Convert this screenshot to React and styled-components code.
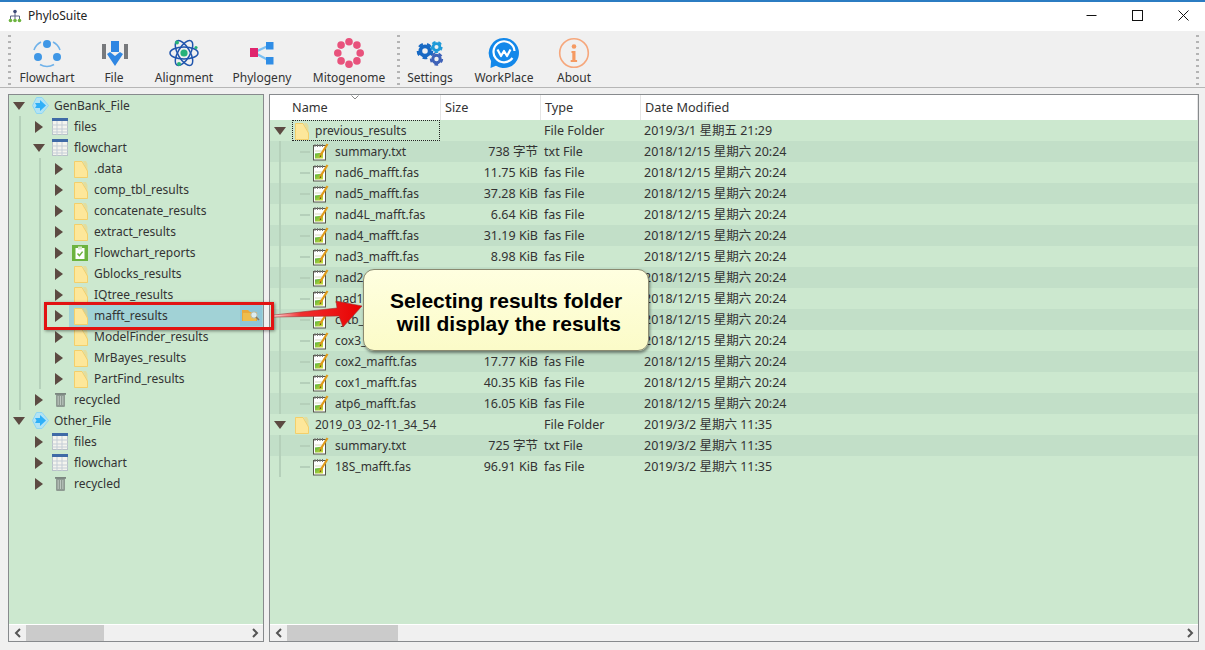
import React from "react";
import styled, { createGlobalStyle } from "styled-components";

const Global = createGlobalStyle`
  html, body { margin: 0; padding: 0; background: #f0f0f0; }
  body { font-family: "Noto Sans", "Noto Sans CJK SC", sans-serif; font-size: 12.5px; color: #333; overflow: hidden; }
`;

const Window = styled.div`
  position: relative;
  width: 1205px;
  height: 650px;
  display: flex;
  flex-direction: column;
  background: #f0f0f0;
  overflow: hidden;
`;

const TitleBar = styled.header`
  height: 27px;
  flex: none;
  display: flex;
  align-items: center;
  background: #fff;
  border-top: 2px solid #2b7cc2;
  padding: 0 0 2px 8px;
  gap: 6px;
  font-size: 12px;
  color: #222;
`;
const WinControls = styled.div`
  margin-left: auto;
  display: flex;
  padding-right: 16px;
  gap: 35px;
  color: #111;
`;
const Toolbar = styled.nav`
  height: 56px;
  flex: none;
  display: flex;
  align-items: stretch;
  border-bottom: 1px solid #b6b6b6;
  padding-left: 8px;
`;
const Grip = styled.div`
  width: 3px;
  margin: 2px ${(p) => p.$right}px 2px ${(p) => p.$left}px;
  background-image: radial-gradient(circle, #b4b4b4 1.4px, transparent 1.5px);
  background-size: 3px 6px;
`;
const Tool = styled.button`
  width: ${(p) => p.$w}px;
  flex: none;
  border: 0;
  background: transparent;
  padding: 5px 0 0;
  display: flex;
  flex-direction: column;
  align-items: center;
  font: inherit;
  font-size: 12px;
  color: #333;
  line-height: 14px;
`;
const ToolIcon = styled.span`
  width: 36px;
  height: 35px;
  display: block;
`;
const Spacer = styled.div`
  flex: 1;
`;
const Content = styled.main`
  flex: 1;
  display: flex;
  gap: 5px;
  padding: 6px 6px 8px 8px;
  min-height: 0;
`;
const Panel = styled.section`
  width: ${(p) => (p.$w ? p.$w + "px" : "auto")};
  flex: ${(p) => (p.$w ? "none" : "1")};
  box-sizing: border-box;
  border: 1px solid #878a8d;
  display: flex;
  flex-direction: column;
  background: #cce8cf;
  min-width: 0;
`;
const TreeArea = styled.div`
  flex: 1;
  min-height: 0;
`;
const guideBg = (g = []) => g.map(() => "linear-gradient(#b5d0ba,#b5d0ba)").join(",") || "none";
const guidePos = (g = []) => g.map((x) => `${x}px 0`).join(",") || "0 0";

const TreeRow = styled.div`
  height: 21px;
  display: flex;
  align-items: center;
  padding-left: ${(p) => p.$depth * 20}px;
  background-image: ${(p) => guideBg(p.$guides)};
  background-position: ${(p) => guidePos(p.$guides)};
  background-size: 2px 100%;
  background-repeat: no-repeat;
`;
const Expander = styled.span`
  width: 20px;
  height: 21px;
  flex: none;
  display: flex;
  align-items: center;
  justify-content: center;
`;
const ArrowRight = styled.i`
  display: block;
  border-left: 8px solid #5c4a42;
  border-top: 6px solid transparent;
  border-bottom: 6px solid transparent;
`;
const ArrowDown = styled.i`
  display: block;
  border-top: 8px solid #5c4a42;
  border-left: 6px solid transparent;
  border-right: 6px solid transparent;
`;
const Connector = styled.span`
  display: block;
  width: 10px;
  height: 2px;
  background: #b5d0ba;
  margin-left: 10px;
`;
const Node = styled.div`
  flex: 1;
  min-width: 0;
  height: ${(p) => (p.$selected ? "24px" : "21px")};
  display: flex;
  align-items: center;
  background: ${(p) => (p.$selected ? "#a1d2d6" : "transparent")};
  border: ${(p) => (p.$focus ? "1px dotted #222" : "0")};
  margin: ${(p) => (p.$focus ? "0 1px 0 2px" : "0")};
  box-sizing: border-box;
`;
const IconBox = styled.span`
  width: ${(p) => p.$w || 25}px;
  flex: none;
  display: flex;
  padding-left: ${(p) => p.$pad}px;
  box-sizing: border-box;
`;
const Label = styled.span`
  white-space: nowrap;
  font-size: 12px;
`;
const RowAction = styled.span`
  margin-left: auto;
  margin-right: 1px;
  width: 22px;
  height: 21px;
  background: #8fc6d8;
  display: flex;
  align-items: center;
  justify-content: center;
`;
const Scrollbar = styled.div`
  height: 16px;
  flex: none;
  display: flex;
  align-items: center;
  background: #f0f0f0;
  border-top: 1px solid #fff;
  color: #555;
`;
const ScrollBtn = styled.span`
  width: 17px;
  flex: none;
  display: flex;
  justify-content: center;
`;
const Thumb = styled.div`
  width: ${(p) => p.$w}px;
  height: 16px;
  background: #cbcbcb;
  margin-right: auto;
`;
const HeaderRow = styled.div`
  height: 25px;
  flex: none;
  background: #fff;
  display: grid;
  grid-template-columns: 171px 100px 100px 1fr;
  position: relative;
  font-size: 12.7px;
`;
const HeaderCell = styled.div`
  display: flex;
  align-items: center;
  padding: 0 0 2px ${(p) => p.$pad}px;
  border-right: 1px solid #e5e5e5;
`;
const SortMark = styled.svg`
  position: absolute;
  left: 81px;
  top: 0;
`;
const FileRow = styled.div`
  height: 21px;
  display: grid;
  grid-template-columns: 171px 100px 100px 1fr;
  background: ${(p) => (p.$alt ? "#c2dfc8" : "transparent")};
`;
const NameCell = styled.div`
  min-width: 0;
`;
const SizeCell = styled.div`
  text-align: right;
  padding-right: 3px;
  line-height: 21px;
`;
const TextCell = styled.div`
  padding-left: 3px;
  line-height: 21px;
  white-space: nowrap;
`;
const RedBox = styled.div`
  position: absolute;
  left: 44px;
  top: 302px;
  width: 230px;
  height: 28px;
  border: 3px solid #e21212;
  box-sizing: border-box;
  box-shadow: 1px 1px 3px rgba(0, 0, 0, 0.45);
`;
const Pointer = styled.svg`
  position: absolute;
  left: 270px;
  top: 285px;
`;
const Callout = styled.div`
  position: absolute;
  left: 363px;
  top: 269px;
  width: 286px;
  height: 82px;
  box-sizing: border-box;
  padding-top: 4px;
  border-radius: 11px;
  background: linear-gradient(#ffffe0, #fbfbc8);
  border: 1px solid #8a8a70;
  box-shadow: 1px 2px 3px rgba(0, 0, 0, 0.45);
  display: flex;
  align-items: center;
  justify-content: center;
  text-align: center;
  font-family: "Liberation Sans", Arial, sans-serif;
  font-weight: 700;
  font-size: 21px;
  line-height: 23px;
  color: #000;
  white-space: pre;
`;

const Folder = () => (
  <svg width="14" height="18" viewBox="0 0 14 18">
    <path d="M0.5 1.5 H8 L13.5 11 V17.5 H0.5 Z" fill="#fde79a" stroke="#f3cf6b" />
    <path d="M9 1 H12 L13.5 4 V12 Z" fill="#f7d36f" opacity=".5" />
  </svg>
);
const TableIcon = () => (
  <svg width="16" height="17" viewBox="0 0 16 17">
    <rect x="0.5" y="0.5" width="15" height="16" fill="#f4f4ee" stroke="#b8c2c8" />
    <rect x="0" y="0" width="16" height="3" fill="#3f6aa6" />
    <path d="M0 7h16M0 11h16M0 14h16M5 3v14M10 3v14" stroke="#c4cdd6" strokeWidth="1" />
  </svg>
);
const Trash = () => (
  <svg width="16" height="15" viewBox="0 0 16 15">
    <rect x="4" y="2" width="9" height="13" rx="1.2" fill="#8e9a92" />
    <rect x="3" y="1" width="11" height="1.8" fill="#7b867f" />
    <path d="M6.2 4v9M8.5 4v9M10.8 4v9" stroke="#c4cdc6" strokeWidth=".9" />
  </svg>
);
const Root = () => (
  <svg width="17" height="17" viewBox="0 0 17 17">
    <path d="M4.5 0.5H10L16.5 8.5 10 16.5H4.5L0.5 8.5Z" fill="#b2e3f5" stroke="#8fd6f2" strokeLinejoin="round" />
    <path d="M3 6h5V3l6 5.5L8 14v-3H3l1.5-2.500z" fill="#2fb0f8" />
  </svg>
);
const Report = () => (
  <svg width="16" height="16" viewBox="0 0 16 16">
    <rect width="16" height="16" fill="#6cb33f" />
    <rect x="3.5" y="3" width="9" height="11" fill="#fff" />
    <rect x="6" y="1.5" width="4" height="3" fill="#d8ecc8" />
    <path d="M5.5 8.5 7.4 10.6 10.6 6.6" fill="none" stroke="#6cb33f" strokeWidth="1.5" />
  </svg>
);
const NoteFile = () => (
  <svg width="16" height="18" viewBox="0 0 16 18">
    <defs>
      <linearGradient id="nf" x1="0" x2="1" y1="0" y2="1">
        <stop offset="0" stopColor="#4fae3c" />
        <stop offset="1" stopColor="#d8de3c" />
      </linearGradient>
    </defs>
    <rect x="0.5" y="2.5" width="12" height="14.5" fill="#fff" stroke="#55554a" />
    <path d="M2 1v3M4.5 1v3M7 1v3M9.5 1v3" stroke="#777" />
    <path d="M2 10.5l8-1v6H2z" fill="url(#nf)" />
    <path d="M2 8h7" stroke="#d9d9c0" />
    <path d="M14.5 1 7 13" stroke="#e09a1a" strokeWidth="2.2" />
    <path d="M7.4 12.3 6.4 14.6 8.4 13.2" fill="#5c3a10" />
  </svg>
);
const PeekFolder = () => (
  <svg width="18" height="13" viewBox="0 0 18 13">
    <path d="M0 1h6l2 2h7v9H0z" fill="#e9a93a" />
    <rect x="1" y="4" width="13" height="8" fill="#efbd4c" />
    <circle cx="12" cy="6" r="3.2" fill="#dcecf0" stroke="#b9b9a0" />
    <path d="M14 8l3 3" stroke="#8a7a60" strokeWidth="1.6" />
  </svg>
);
const Chev = ({ left }) => (
  <svg width="8" height="10" viewBox="0 0 8 10">
    <path d={left ? "M6 1 2 5l4 4" : "M2 1l4 4-4 4"} fill="none" stroke="#555" strokeWidth="2" />
  </svg>
);

const IconFlow = () => (
  <svg width="36" height="34" viewBox="0 0 36 34">
    <g fill="none" stroke="#6fb2ea" strokeWidth="1.6">
      <path d="M5 14A14 14 0 0 1 12 6" />
      <path d="M24 6a14 14 0 0 1 7 8" />
      <path d="M11 28.5a14 14 0 0 0 14 0" />
    </g>
    <g fill="#3f97e6">
      <circle cx="18" cy="8" r="4" />
      <circle cx="9" cy="21" r="4" />
      <circle cx="28" cy="21" r="4" />
    </g>
  </svg>
);
const IconFile = () => (
  <svg width="36" height="34" viewBox="0 0 36 34">
    <rect x="6" y="8" width="4" height="15" fill="#77797c" />
    <rect x="28" y="8" width="4" height="15" fill="#77797c" />
    <rect x="15" y="5" width="8" height="11" fill="#2f86e2" />
    <path d="M11 18l3-2 5 4 5-4 3 2-8 12z" fill="#2f86e2" />
  </svg>
);
const IconAtom = () => (
  <svg width="36" height="34" viewBox="0 0 36 34">
    <g fill="none" stroke="#1f55ad" strokeWidth="1.5">
      <ellipse cx="18" cy="17" rx="14" ry="6" />
      <ellipse cx="18" cy="17" rx="14" ry="6" transform="rotate(60 18 17)" />
      <ellipse cx="18" cy="17" rx="14" ry="6" transform="rotate(120 18 17)" />
    </g>
    <circle cx="18" cy="17" r="3.6" fill="#27b27a" />
    <circle cx="11" cy="6.5" r="2" fill="#27b27a" />
    <circle cx="30" cy="11.5" r="1.6" fill="#27b27a" />
    <circle cx="13" cy="28" r="2" fill="#27b27a" />
  </svg>
);
const IconTree = () => (
  <svg width="36" height="34" viewBox="0 0 36 34">
    <path d="M10 16.5 25 9.5M10 16.5l15 8" stroke="#7cc0f2" strokeWidth="2.2" />
    <rect x="6" y="12" width="8" height="9" fill="#e0266e" />
    <rect x="22" y="6" width="7.5" height="7.5" fill="#2f8de6" />
    <rect x="22" y="21" width="7.5" height="7.5" fill="#2f8de6" />
  </svg>
);
const IconMito = () => {
  const dots = Array.from({ length: 8 }, (_, i) => {
    const a = (i * Math.PI) / 4 - Math.PI / 2;
    return <circle key={i} cx={18 + 11.2 * Math.cos(a)} cy={17 + 11.2 * Math.sin(a)} r="3.8" fill="#e8527c" />;
  });
  return (
    <svg width="36" height="34" viewBox="0 0 36 34">
      {dots}
    </svg>
  );
};
const Gear = ({ x, y, r, c }) => (
  <g fill="none" stroke={c}>
    <circle cx={x} cy={y} r={r * 0.62} strokeWidth={r * 0.5} />
    <circle cx={x} cy={y} r={r * 0.95} strokeWidth={r * 0.32} strokeDasharray={`${r * 0.62} ${r * 0.56}`} />
  </g>
);
const IconGears = () => (
  <svg width="36" height="34" viewBox="0 0 36 34">
    <Gear x={13} y={15} r={7.5} c="#1769c4" />
    <Gear x={24.5} y={11} r={5.5} c="#1f9ad8" />
    <Gear x={24.5} y={23} r={6} c="#3f62b8" />
  </svg>
);
const IconWork = () => (
  <svg width="36" height="34" viewBox="0 0 36 34">
    <path d="M18 2a15 15 0 1 1-8 27.7L4.5 32l.6-7A15 15 0 0 1 18 2z" fill="#1388ea" />
    <path d="M26.5 22A10.5 10.5 0 1 1 28.5 15" fill="none" stroke="#fff" strokeWidth="2.2" />
    <path d="M11.5 13.5 15 20l3-5 3 5 3.5-6.5" fill="none" stroke="#fff" strokeWidth="2.2" strokeLinejoin="round" />
  </svg>
);
const IconInfo = () => (
  <svg width="36" height="34" viewBox="0 0 36 34">
    <circle cx="18" cy="17" r="14.3" fill="none" stroke="#f6a77c" strokeWidth="1.6" />
    <circle cx="18" cy="10.5" r="2.3" fill="#f59a62" />
    <path d="M15.5 15h4v9h1.6v2h-6.4v-2h1.6v-7h-.8z" fill="#f59a62" />
  </svg>
);
const AppIcon = () => (
  <svg width="14" height="14" viewBox="0 0 14 14">
    <circle cx="7" cy="2.5" r="1.8" fill="#3c4a78" />
    <path d="M7 4v3M2.5 10V7h9v3M7 7v3" fill="none" stroke="#5a6488" />
    <circle cx="2.5" cy="11.5" r="1.8" fill="#6cb33f" />
    <circle cx="7" cy="11.5" r="1.8" fill="#6cb33f" />
    <circle cx="11.5" cy="11.5" r="1.8" fill="#6cb33f" />
  </svg>
);

const icons = {
  root: [<Root key="i" />, 3],
  table: [<TableIcon key="i" />, 3],
  trash: [<Trash key="i" />, 3],
  folder: [<Folder key="i" />, 5],
  report: [<Report key="i" />, 3],
  note: [<NoteFile key="i" />, 3],
};

const tools1 = [
  ["Flowchart", 68, <IconFlow />],
  ["File", 66, <IconFile />],
  ["Alignment", 74, <IconAtom />],
  ["Phylogeny", 82, <IconTree />],
  ["Mitogenome", 92, <IconMito />],
];
const tools2 = [
  ["Settings", 56, <IconGears />],
  ["WorkPlace", 92, <IconWork />],
  ["About", 48, <IconInfo />],
];

const tree = [
  ["GenBank_File", 0, "root", "d", []],
  ["files", 1, "table", "r", [10]],
  ["flowchart", 1, "table", "d", [10]],
  [".data", 2, "folder", "r", [10, 30]],
  ["comp_tbl_results", 2, "folder", "r", [10, 30]],
  ["concatenate_results", 2, "folder", "r", [10, 30]],
  ["extract_results", 2, "folder", "r", [10, 30]],
  ["Flowchart_reports", 2, "report", "r", [10, 30]],
  ["Gblocks_results", 2, "folder", "r", [10, 30]],
  ["IQtree_results", 2, "folder", "r", [10, 30]],
  ["mafft_results", 2, "folder", "r", [10, 30], true],
  ["ModelFinder_results", 2, "folder", "r", [10, 30]],
  ["MrBayes_results", 2, "folder", "r", [10, 30]],
  ["PartFind_results", 2, "folder", "r", [10, 30]],
  ["recycled", 1, "trash", "r", [10]],
  ["Other_File", 0, "root", "d", []],
  ["files", 1, "table", "r", []],
  ["flowchart", 1, "table", "r", []],
  ["recycled", 1, "trash", "r", []],
];

const d1 = "2018/12/15 星期六 20:24";
const d2 = "2019/3/2 星期六 11:35";
const files = [
  ["previous_results", "", "File Folder", "2019/3/1 星期五 21:29", "folder", true],
  ["summary.txt", "738 字节", "txt File", d1],
  ["nad6_mafft.fas", "11.75 KiB", "fas File", d1],
  ["nad5_mafft.fas", "37.28 KiB", "fas File", d1],
  ["nad4L_mafft.fas", "6.64 KiB", "fas File", d1],
  ["nad4_mafft.fas", "31.19 KiB", "fas File", d1],
  ["nad3_mafft.fas", "8.98 KiB", "fas File", d1],
  ["nad2_mafft.fas", "", "", d1],
  ["nad1_mafft.fas", "", "", d1],
  ["cytb_mafft.fas", "", "", d1],
  ["cox3_mafft.fas", "", "", d1],
  ["cox2_mafft.fas", "17.77 KiB", "fas File", d1],
  ["cox1_mafft.fas", "40.35 KiB", "fas File", d1],
  ["atp6_mafft.fas", "16.05 KiB", "fas File", d1],
  ["2019_03_02-11_34_54", "", "File Folder", d2, "folder", false],
  ["summary.txt", "725 字节", "txt File", d2],
  ["18S_mafft.fas", "96.91 KiB", "fas File", d2],
];

const Bar = ({ thumb }) => (
  <Scrollbar>
    <ScrollBtn><Chev left /></ScrollBtn>
    <Thumb $w={thumb} />
    <ScrollBtn><Chev /></ScrollBtn>
  </Scrollbar>
);

export default function App() {
  return (
    <Window>
      <Global />
      <TitleBar>
        <AppIcon />
        <span>PhyloSuite</span>
        <WinControls>
          <svg width="11" height="11" viewBox="0 0 11 11"><path d="M0.5 5.5h10" stroke="currentColor" /></svg>
          <svg width="11" height="11" viewBox="0 0 11 11"><rect x="0.5" y="0.5" width="10" height="10" fill="none" stroke="currentColor" /></svg>
          <svg width="11" height="11" viewBox="0 0 11 11"><path d="M.5.5l10 10M10.5.5l-10 10" stroke="currentColor" /></svg>
        </WinControls>
      </TitleBar>
      <Toolbar>
        <Grip $left={0} $right={2} />
        {tools1.map(([n, w, ic]) => (
          <Tool key={n} $w={w}><ToolIcon>{ic}</ToolIcon>{n}</Tool>
        ))}
        <Grip $left={2} $right={2} />
        {tools2.map(([n, w, ic]) => (
          <Tool key={n} $w={w}><ToolIcon>{ic}</ToolIcon>{n}</Tool>
        ))}
        <Spacer />
        <Grip $left={0} $right={6} />
      </Toolbar>
      <Content>
        <Panel $w={256}>
          <TreeArea>
            {tree.map(([name, depth, icon, dir, guides, selected], i) => (
              <TreeRow key={i} $depth={depth} $guides={guides}>
                <Expander>{dir === "d" ? <ArrowDown /> : <ArrowRight />}</Expander>
                <Node $selected={selected}>
                  <IconBox $pad={icons[icon][1]}>{icons[icon][0]}</IconBox>
                  <Label>{name}</Label>
                  {selected && <RowAction><PeekFolder /></RowAction>}
                </Node>
              </TreeRow>
            ))}
          </TreeArea>
          <Bar thumb={78} />
        </Panel>
        <Panel>
          <HeaderRow>
            <SortMark width="8" height="5" viewBox="0 0 8 5"><path d="M.5.5 4 4 7.5.5" fill="none" stroke="#888" /></SortMark>
            <HeaderCell $pad={22}>Name</HeaderCell>
            <HeaderCell $pad={4}>Size</HeaderCell>
            <HeaderCell $pad={4}>Type</HeaderCell>
            <HeaderCell $pad={4}>Date Modified</HeaderCell>
          </HeaderRow>
          <TreeArea>
            {files.map(([name, size, type, date, kind, focus], i) => (
              <FileRow key={i} $alt={i % 2 === 1}>
                <NameCell>
                  {kind ? (
                    <TreeRow $depth={0}>
                      <Expander><ArrowDown /></Expander>
                      <Node $focus={focus}>
                        <IconBox $pad={focus ? 2 : 5} $w={focus ? 22 : 25}><Folder /></IconBox>
                        <Label>{name}</Label>
                      </Node>
                    </TreeRow>
                  ) : (
                    <TreeRow $depth={1} $guides={[9]}>
                      <Expander><Connector /></Expander>
                      <Node>
                        <IconBox $pad={3}><NoteFile /></IconBox>
                        <Label>{name}</Label>
                      </Node>
                    </TreeRow>
                  )}
                </NameCell>
                <SizeCell>{size}</SizeCell>
                <TextCell>{type}</TextCell>
                <TextCell>{date}</TextCell>
              </FileRow>
            ))}
          </TreeArea>
          <Bar thumb={111} />
        </Panel>
      </Content>
      <RedBox />
      <Pointer width="100" height="50" viewBox="0 0 100 50">
        <defs>
          <linearGradient id="pg" x1="0" x2="1" y1="0" y2="0">
            <stop offset="0" stopColor="#ffd8d8" />
            <stop offset="0.3" stopColor="#f03030" />
            <stop offset="1" stopColor="#e80000" />
          </linearGradient>
        </defs>
        <path d="M4 30 67 23 66 16 92 21 73 42 69 31 4 32Z" fill="url(#pg)" stroke="#a03030" strokeWidth=".6" />
      </Pointer>
      <Callout>{"Selecting results folder\n will display the results"}</Callout>
    </Window>
  );
}
